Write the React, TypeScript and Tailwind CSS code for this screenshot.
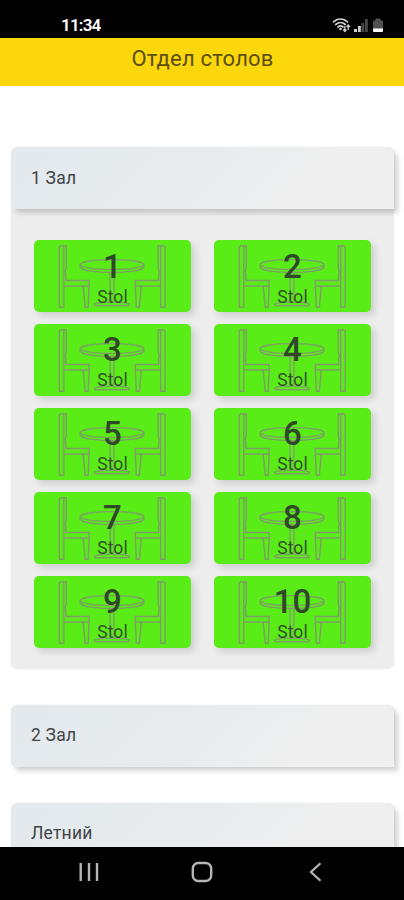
const halls = [
  { name: "1 Зал", tables: [1, 2, 3, 4, 5, 6, 7, 8, 9, 10] },
  { name: "2 Зал", tables: [] },
  { name: "Летний", tables: [] },
];

function StatusBar() {
  return (
    <div className="flex h-[38px] shrink-0 items-end justify-between bg-black pr-5 pb-[3px] pl-[61px] text-white">
      <span className="text-[17px] leading-5 font-semibold tracking-[-0.8px]">11:34</span>
      <svg width="52" height="16" viewBox="0 0 52 16" className="mb-[2px]" fill="none">
        <g stroke="#d0d0d0" strokeWidth="1.700" strokeLinecap="round">
          <path d="M1.500 5C5.500 1 11.500 1 15.500 5" />
          <path d="M3.700 7.500C6.500 5 10.500 5 13.300 7.500" />
          <path d="M6 10c1.500-1.300 3.500-1.300 5 0" />
        </g>
        <circle cx="8.500" cy="12" r="1.300" fill="#d0d0d0" />
        <path d="M12.800 9v5.500M11.200 12.500l1.600 2 1.600-2M16.200 13V8M14.600 10L16.200 8l1.600 2" stroke="#d0d0d0" strokeWidth="1.300" />
        <path d="M22 12h3v3h-3zM26 9h2.800v6H26z" fill="#d0d0d0" />
        <path d="M29.500 6h2.800v9h-2.800zM33 2h2.800v13H33z" fill="#484848" />
        <path d="M41 4.500q0-1 1-1h1.500V1.500h5v2H50q1 0 1 1V12H41z" fill="#505050" />
        <path d="M41 11.500h10v2.500q0 1-1 1h-8q-1 0-1-1z" fill="#fff" />
      </svg>
    </div>
  );
}

function Chair() {
  return (
    <>
      <path d="M25.500 6.500L28.500 5.500H30V67.500H25.500z" />
      <path d="M30 5.500H32.500V28L31 33" />
      <path d="M32 33V40.500H55.500V46H30" />
      <path d="M49.500 46L51.500 67.500H54.500L55.500 46" />
    </>
  );
}

function TableDrawing() {
  return (
    <svg
      className="absolute inset-0 size-full"
      viewBox="0 0 158 72"
      fill="none"
      stroke="#7f9c69"
      strokeWidth="1.400"
    >
      <Chair />
      <g transform="translate(157.500 0) scale(-1 1)">
        <Chair />
      </g>
      <ellipse cx="78.500" cy="24.500" rx="32" ry="5" />
      <path d="M46.500 24.500v2.500c2 7.300 62 7.300 64 0v-2.500" />
      <path d="M76.500 32.500v29M80.500 32.500v29" />
      <path d="M61 64.500c3-3 32-3 35 0l-1 1.500H62z" />
    </svg>
  );
}

function TableTile({ number }: { number: number }) {
  return (
    <button
      type="button"
      className="relative h-[72px] rounded-[5px] bg-[#59ec17] text-center text-[#35512a] shadow-[4px_4px_7px_rgba(0,0,0,0.13)]"
    >
      <TableDrawing />
      <span className="relative flex h-full flex-col items-center pt-[7.500px]">
        <span className="text-[33px] leading-[38px] font-medium text-[#2f4926]">{number}</span>
        <span className="mt-px text-[17.500px] leading-5 tracking-[0.100px]">Stol</span>
      </span>
    </button>
  );
}

function Hall({ name, tables }: { name: string; tables: number[] }) {
  return (
    <section className="rounded-[7px] bg-[#ededed] shadow-[0_0_1px_rgba(0,0,0,0.2)]">
      <h2 className="flex h-[62px] items-center rounded-t-[8px] rounded-bl-[5px] bg-linear-[135deg,#e3e9ed,#e7ebee_45%,#efefef_75%] px-5 text-[17.500px] tracking-[0.200px] text-[#414548] shadow-[4px_4px_5px_rgba(0,0,0,0.17)]">
        {name}
      </h2>
      {tables.length > 0 ? (
        <div className="grid grid-cols-2 gap-x-[23px] gap-y-[11.900px] px-[23px] pt-[31px] pb-[21px]">
          {tables.map((n) => (
            <TableTile key={n} number={n} />
          ))}
        </div>
      ) : null}
    </section>
  );
}

function NavBar() {
  return (
    <nav className="grid h-[53px] shrink-0 grid-cols-[99px_1fr_99px] bg-black">
      <svg width="20" height="20" viewBox="0 0 20 20" className="mt-[15px] ml-[79px]" stroke="#b5b5b5" strokeWidth="2.400">
        <path d="M1.700 1v18M10 1v18M18 1v18" />
      </svg>
      <svg width="22" height="22" viewBox="0 0 22 22" className="mx-auto mt-[14px]" fill="none" stroke="#b5b5b5" strokeWidth="2.400">
        <rect x="1.800" y="2" width="18.400" height="18" rx="5.500" />
      </svg>
      <svg width="14" height="20" viewBox="0 0 14 20" className="mt-[15px] ml-[4px]" fill="none" stroke="#b5b5b5" strokeWidth="2.200">
        <path d="M11.500 1.200L2 10l9.500 8.800" />
      </svg>
    </nav>
  );
}

export default function App() {
  return (
    <div className="flex h-[900px] w-full flex-col overflow-hidden bg-white font-['Roboto',sans-serif]">
      <StatusBar />
      <header className="flex h-[48px] shrink-0 justify-center bg-[#fcd70b] pt-[6px] pl-px">
        <h1 className="text-[22px] leading-[30px] tracking-[0.200px] text-[#5b4f12]">Отдел столов</h1>
      </header>
      <main className="flex min-h-0 flex-1 flex-col overflow-hidden pt-[61px] pr-[10px] pl-[11px]">
        <div className="flex shrink-0 flex-col gap-[36px]">
          {halls.map((hall) => (
            <Hall key={hall.name} name={hall.name} tables={hall.tables} />
          ))}
        </div>
      </main>
      <NavBar />
    </div>
  );
}
